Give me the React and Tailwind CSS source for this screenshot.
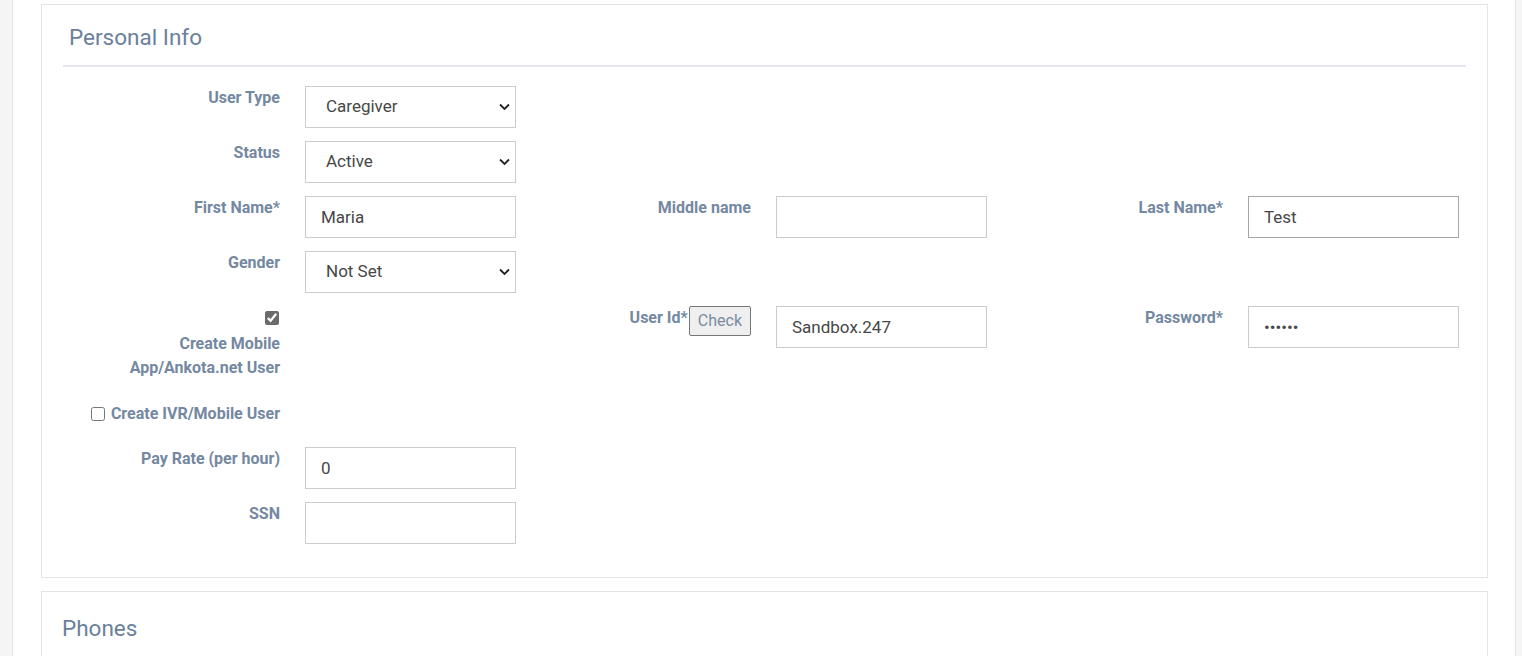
import { useState } from "react";

const labelCls = "text-[16px] font-bold leading-6 text-[#7488a2] text-right";
const inputCls =
  "w-[211px] h-[42px] border border-[#cccccc] bg-white pl-[15px] pr-2 text-[17px] text-[#474747] outline-none";

function Chevron() {
  return (
    <svg
      className="pointer-events-none absolute right-[6px] top-1/2 -translate-y-1/2"
      width="11"
      height="7"
      viewBox="0 0 11 7"
      fill="none"
    >
      <path d="M1 1l4.5 4.5L10 1" stroke="#222" strokeWidth="1.8" />
    </svg>
  );
}

function Select({ value, options }) {
  return (
    <div className="relative w-[211px]">
      <select
        defaultValue={value}
        className="w-[211px] h-[42px] appearance-none border border-[#cccccc] bg-white pl-[20px] pr-6 text-[17px] text-[#474747] outline-none"
      >
        {options.map((o) => (
          <option key={o}>{o}</option>
        ))}
      </select>
      <Chevron />
    </div>
  );
}

function Cell({ label, children, wide }) {
  return (
    <div className={wide ? "flex w-[472px] shrink-0" : "flex w-[471px] shrink-0"}>
      <div className="flex w-[217px] justify-end">{label}</div>
      <div className="ml-[25px]">{children}</div>
    </div>
  );
}

export default function App() {
  const [mobile, setMobile] = useState(true);
  const [ivr, setIvr] = useState(false);

  return (
    <div className="min-h-screen bg-[#f5f5f5] font-['Roboto',sans-serif]">
      <div className="ml-[12px] mr-[6px] min-h-[656px] border-x border-[#e6e6e6] bg-white pl-[28px] pr-[27px] pt-[4px]">
        {/* Personal Info */}
        <div className="border border-[#e4e4e4] bg-white px-[21px] pb-[33px] pt-[18px]">
          <div className="border-b-2 border-[#e3e7ed] px-[6px] pb-[14px]">
            <h2 className="text-[22.5px] leading-7 text-[#6b809c]">Personal Info</h2>
          </div>

          <div className="pt-[19px]">
            <div className="flex">
              <Cell label={<span className={labelCls}>User Type</span>}>
                <Select value="Caregiver" options={["Caregiver", "Admin", "Scheduler"]} />
              </Cell>
            </div>

            <div className="mt-[13px] flex">
              <Cell label={<span className={labelCls}>Status</span>}>
                <Select value="Active" options={["Active", "Inactive"]} />
              </Cell>
            </div>

            <div className="mt-[13px] flex">
              <Cell label={<span className={labelCls}>First Name*</span>}>
                <input className={inputCls} defaultValue="Maria" />
              </Cell>
              <Cell wide label={<span className={labelCls}>Middle name</span>}>
                <input className={inputCls} defaultValue="" />
              </Cell>
              <Cell label={<span className={labelCls}>Last Name*</span>}>
                <input className={inputCls + " !border-[#a6a6a6]"} defaultValue="Test" />
              </Cell>
            </div>

            <div className="mt-[13px] flex">
              <Cell label={<span className={labelCls}>Gender</span>}>
                <Select value="Not Set" options={["Not Set", "Female", "Male"]} />
              </Cell>
            </div>

            <div className="mt-[13px] flex">
              <Cell
                label={
                  <div className="flex flex-col items-end">
                    <input
                      type="checkbox"
                      checked={mobile}
                      onChange={() => setMobile(!mobile)}
                      className="mt-[5px] mr-[1px] h-[14px] w-[14px] accent-[#6b6b6b]"
                    />
                    <span className={labelCls + " mt-[7px]"}>
                      Create Mobile
                      <br />
                      App/Ankota.net User
                    </span>
                  </div>
                }
              >
                <div />
              </Cell>
              <Cell
                wide
                label={
                  <div className="flex items-start">
                    <span className={labelCls}>User Id*</span>
                    <button className="ml-[1px] h-[30px] rounded-[2px] border border-[#767676] bg-[#efefef] px-[8px] text-[16px] text-[#7a8aa1]">
                      Check
                    </button>
                  </div>
                }
              >
                <input className={inputCls} defaultValue="Sandbox.247" />
              </Cell>
              <Cell label={<span className={labelCls}>Password*</span>}>
                <input type="password" className={inputCls} defaultValue="secret" />
              </Cell>
            </div>

            <div className="mt-[22px] flex">
              <Cell
                label={
                  <label className="flex items-center">
                    <input
                      type="checkbox"
                      checked={ivr}
                      onChange={() => setIvr(!ivr)}
                      className="mr-[6px] h-[14px] w-[14px] accent-[#6b6b6b]"
                    />
                    <span className={labelCls}>Create IVR/Mobile User</span>
                  </label>
                }
              >
                <div />
              </Cell>
            </div>

            <div className="mt-[21px] flex">
              <Cell label={<span className={labelCls}>Pay Rate (per hour)</span>}>
                <input className={inputCls} defaultValue="0" />
              </Cell>
            </div>

            <div className="mt-[13px] flex">
              <Cell label={<span className={labelCls}>SSN</span>}>
                <input className={inputCls} defaultValue="" />
              </Cell>
            </div>
          </div>
        </div>

        {/* Phones */}
        <div className="mt-[13px] border border-[#e4e4e4] bg-white px-[20px] pb-8 pt-[22px]">
          <h2 className="text-[22.5px] leading-7 text-[#6b809c]">Phones</h2>
        </div>
      </div>
    </div>
  );
}
